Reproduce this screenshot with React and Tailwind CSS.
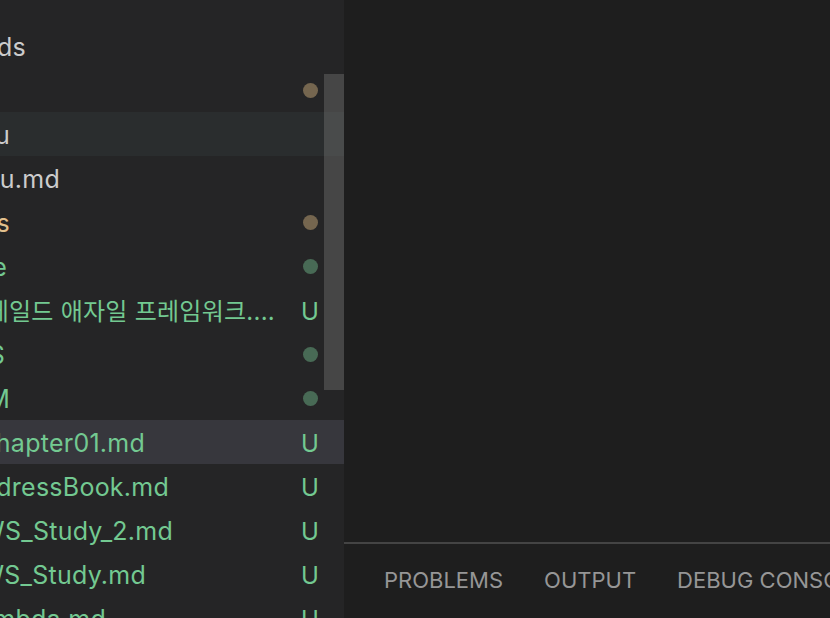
import React from 'react';

const rows = [
  { name: 'Downloads', end: 26, color: 'text-[#cccccc]' },
  { name: '', end: 0, color: 'text-[#cccccc]', deco: 'dot-mod' },
  { name: 'Menu', end: 10, color: 'text-[#cccccc]', hover: true },
  { name: 'Menu.md', end: 60, color: 'text-[#cccccc]' },
  { name: 'Notes', end: 10, color: 'text-[#e2c08d]', deco: 'dot-mod' },
  { name: 'Tistorye', end: 7, color: 'text-[#73c991]', deco: 'dot-new' },
  { name: '스케일드 애자일 프레임워크....', end: 275, color: 'text-[#73c991]', deco: 'U', korean: true },
  { name: 'AWS', end: 5, color: 'text-[#73c991]', deco: 'dot-new' },
  { name: 'JVM', end: 10, color: 'text-[#73c991]', deco: 'dot-new' },
  { name: 'Chapter01.md', end: 145, color: 'text-[#73c991]', deco: 'U', selected: true },
  { name: 'AddressBook.md', end: 169, color: 'text-[#73c991]', deco: 'U' },
  { name: 'AWS_Study_2.md', end: 173, color: 'text-[#73c991]', deco: 'U' },
  { name: 'AWS_Study.md', end: 146, color: 'text-[#73c991]', deco: 'U' },
  { name: 'lambda.md', end: 106, color: 'text-[#73c991]', deco: 'U' },
];

const Decoration = ({ type }) => {
  if (type === 'U') {
    return <span className="text-[#73c991] leading-none mt-[3px]">U</span>;
  }
  if (type === 'dot-mod') {
    return <span className="block w-[15px] h-[15px] rounded-full bg-[#75664f]"></span>;
  }
  if (type === 'dot-new') {
    return <span className="block w-[15px] h-[15px] rounded-full bg-[#486a55]"></span>;
  }
  return null;
};

const ExplorerRow = ({ row }) => {
  const bg = row.selected ? 'bg-[#37373d]' : row.hover ? 'bg-[#2a2d2e]' : '';
  return (
    <div className={`flex items-center h-[44px] pr-[20px] ${bg}`}>
      <div className="flex-1 min-w-0 mt-[3px]">
        <div className="flex justify-end" style={{ width: row.end }}>
          <span className={`whitespace-nowrap ${row.color} ${row.korean ? 'text-[24px]' : ''}`}>{row.name}</span>
        </div>
      </div>
      <div className="w-[28px] shrink-0 flex items-center justify-center text-[24px]">
        <Decoration type={row.deco} />
      </div>
    </div>
  );
};

const App = () => {
  return (
    <div
      className="flex w-[830px] h-[618px] overflow-hidden bg-[#1e1e1e]"
      style={{ fontFamily: 'Inter, "Noto Sans CJK KR", sans-serif' }}
    >
      <div className="relative w-[344px] shrink-0 h-full overflow-hidden bg-[#252526] pt-[24px] text-[25px] tracking-[0.01em]">
        {rows.map((row, i) => (
          <ExplorerRow key={i} row={row} />
        ))}
        <div className="absolute right-0 top-[74px] w-[20px] h-[316px] bg-[rgba(121,121,121,0.4)]"></div>
      </div>

      <div className="flex-1 flex flex-col h-full">
        <div className="h-[542px] shrink-0 bg-[#1e1e1e]"></div>
        <div className="flex-1 border-t-2 border-[#444444] bg-[#1e1e1e]">
          <div className="flex items-center gap-[41px] pl-[40px] h-[72px] text-[22px] text-[#969696] whitespace-nowrap">
            <span>PROBLEMS</span>
            <span>OUTPUT</span>
            <span>DEBUG CONSOLE</span>
            <span>TERMINAL</span>
          </div>
        </div>
      </div>
    </div>
  );
};

export default App;
